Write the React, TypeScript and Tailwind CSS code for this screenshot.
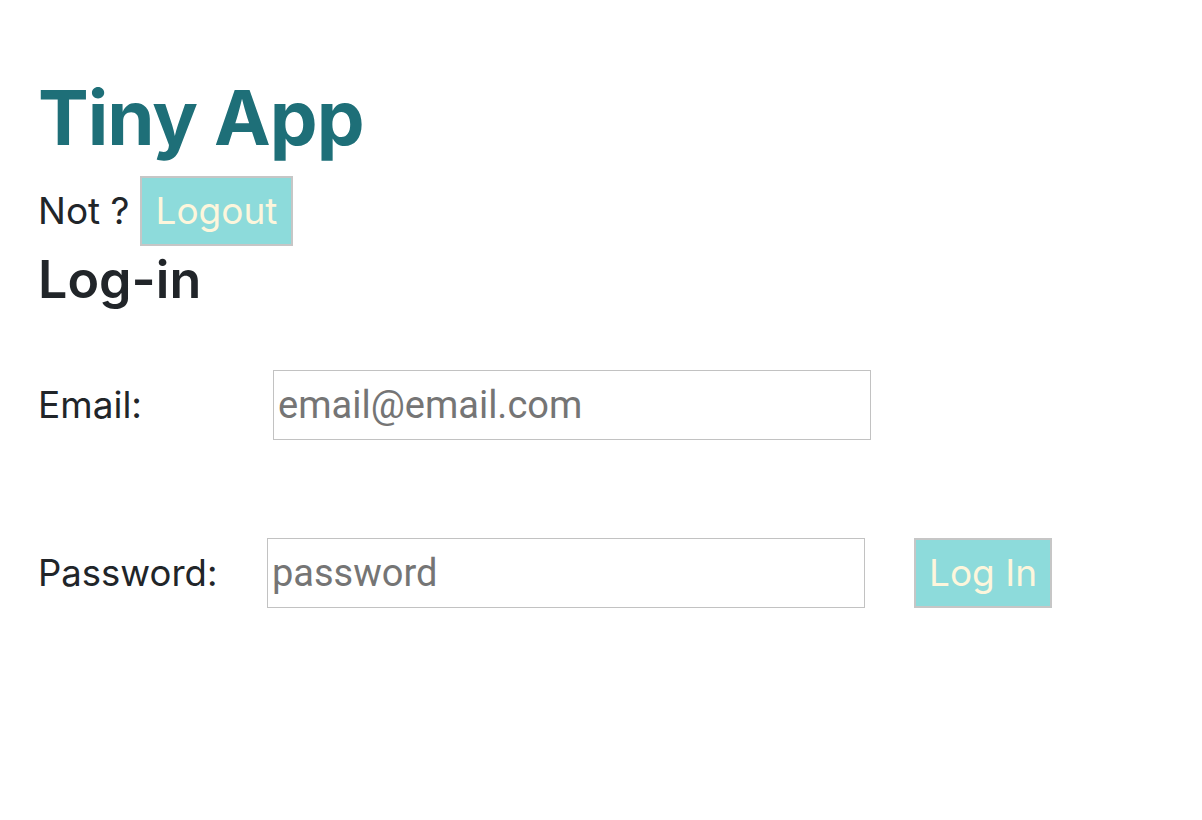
import React from "react";

const font = { fontFamily: "Inter, 'Noto Sans', sans-serif" };
const inputFont = { fontFamily: "Roboto, sans-serif" };

export default function App() {
  return (
    <div className="min-h-[820px] bg-white text-[#212529] px-[38px] pt-[72px]" style={font}>
      <h1 className="text-[76px] font-bold leading-[90px] text-[#1e6f78] tracking-[-1px]">Tiny App</h1>
      <div className="flex items-center gap-[10px] mt-[14px]">
        <span className="text-[37px]">Not ?</span>
        <button className="h-[70px] px-[14px] bg-[#8ddbdb] border-2 border-[#c6c6c6] text-[#fdf6dc] text-[37px]">
          Logout
        </button>
      </div>
      <h2 className="text-[52px] font-semibold leading-[68px]">Log-in</h2>
      <form className="mt-[56px]">
        <div className="flex items-center">
          <label className="w-[235px] text-[37px]">Email:</label>
          <input
            className="w-[598px] h-[70px] border border-[#c2c2c2] px-[4px] text-[38px] placeholder:text-[#757575] outline-none"
            style={inputFont}
            placeholder="email@email.com"
          />
        </div>
        <div className="flex items-center mt-[98px]">
          <label className="w-[229px] text-[36.5px]">Password:</label>
          <input
            type="password"
            className="w-[598px] h-[70px] border border-[#c2c2c2] px-[4px] text-[38px] placeholder:text-[#757575] outline-none"
            style={inputFont}
            placeholder="password"
          />
          <button
            type="button"
            className="ml-[49px] h-[70px] px-[13px] bg-[#8ddbdb] border-2 border-[#c6c6c6] text-[#fdf6dc] text-[37px]"
          >
            Log In
          </button>
        </div>
      </form>
    </div>
  );
}
